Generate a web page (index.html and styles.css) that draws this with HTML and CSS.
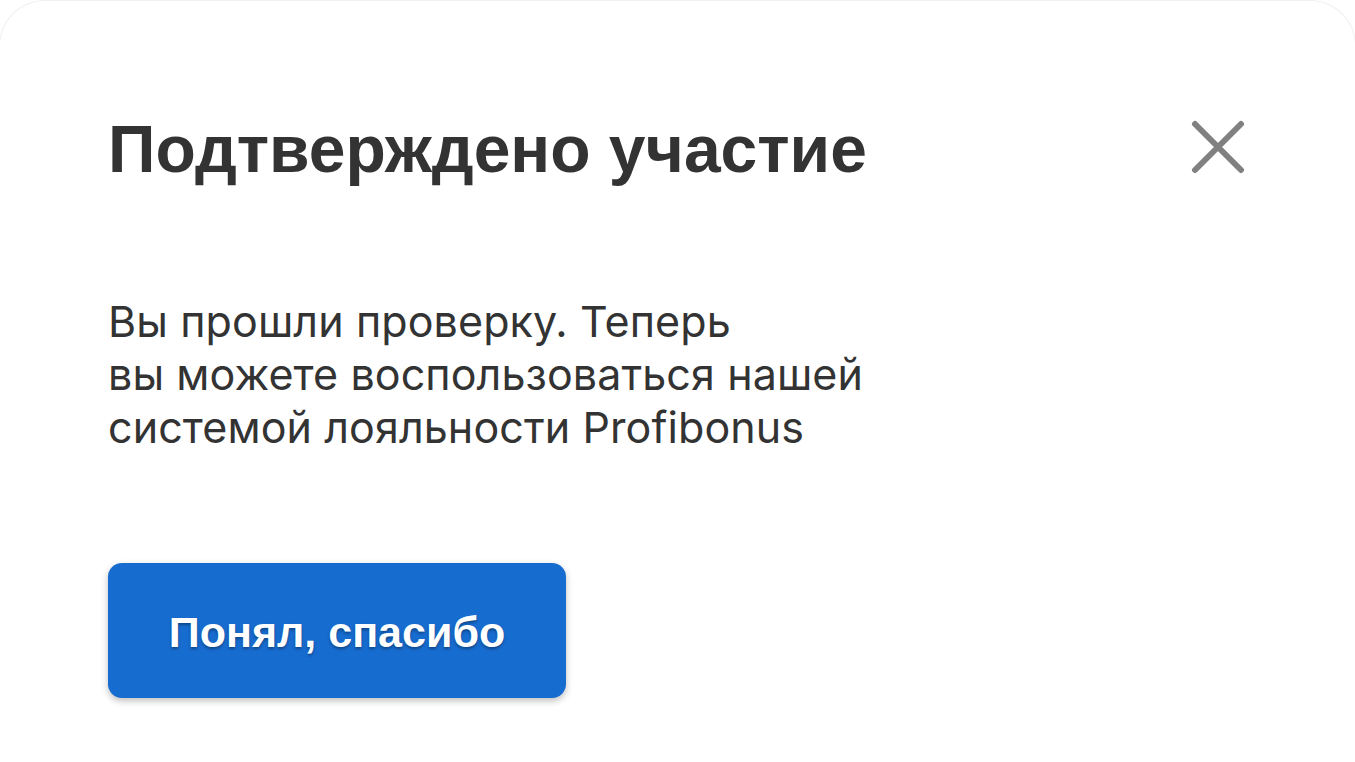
FILE: index.html
```html
<!DOCTYPE html>
<html lang="ru">
<head>
	<meta charset="UTF-8">
	<title>Подтверждено участие</title>
	<link rel="stylesheet" href="styles.css">
</head>
<body>
	<div class="modal">
		<div class="head">
			<h1 class="title">Подтверждено участие</h1>
			<div class="close">
				<svg width="54" height="54" viewBox="0 0 54 54">
					<path d="M4 4L50 50M50 4L4 50" stroke="#808080" stroke-width="6" stroke-linecap="round" fill="none"/>
				</svg>
			</div>
		</div>
		<p class="text">Вы прошли проверку. Теперь<br>вы можете воспользоваться нашей<br>системой лояльности Profibonus</p>
		<div class="btn">Понял, спасибо</div>
	</div>
</body>
</html>
```

FILE: styles.css
```css
html,body{
	margin:0;
	height:100%;
	background-color:#fff;
	overflow:hidden;
}
.modal{
	height:100%;
	margin:0 -1px;
	box-sizing:border-box;
	border:1px solid #efefef;
	border-bottom:none;
	border-radius:46px 46px 0 0;
	padding:115px 110px 0 108px;
	background-color:#fff;
}
.head{
	display:flex;
	justify-content:space-between;
	align-items:flex-start;
}
.title{
	margin:0;
	font-family:"Liberation Sans",Arial,sans-serif;
	font-weight:bold;
	font-size:66px;
	line-height:66px;
	color:#333;
}
.close{
	margin-top:4px;
	width:54px;
	height:54px;
}
.close svg{
	display:block;
}
.text{
	margin:113px 0 0 0;
	font-family:Inter,"Noto Sans",sans-serif;
	font-size:43px;
	line-height:53px;
	letter-spacing:0.1px;
	color:#333;
}
.btn{
	margin-top:109px;
	width:458px;
	height:135px;
	display:flex;
	align-items:center;
	justify-content:center;
	box-sizing:border-box;
	padding-top:4px;
	border-radius:14px;
	background-color:#176cd0;
	box-shadow:0 3px 7px rgba(0,0,0,0.25);
	font-family:"Liberation Sans",Arial,sans-serif;
	font-weight:bold;
	font-size:43px;
	color:#fff;
	text-shadow:0 2px 3px rgba(0,0,0,0.35);
}
```
